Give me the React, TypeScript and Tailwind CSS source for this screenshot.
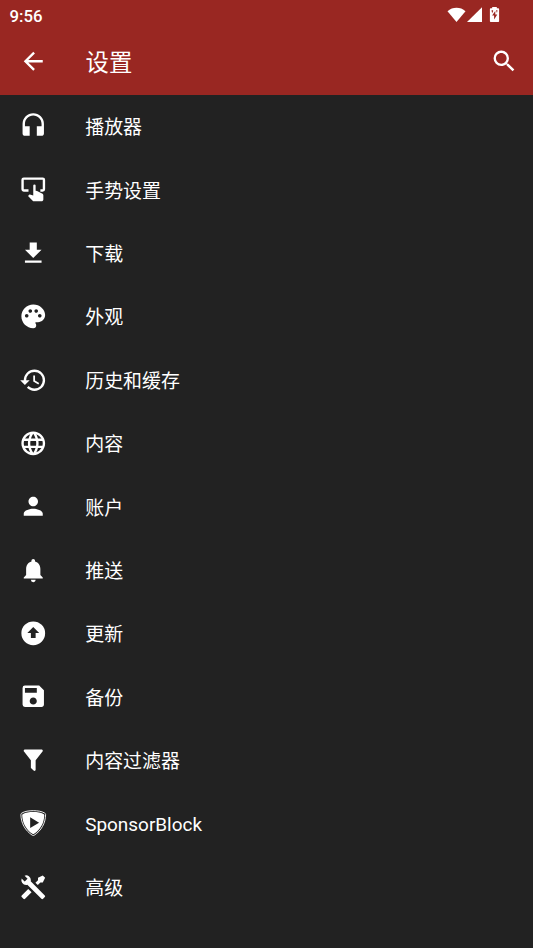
import { ReactNode } from "react";
import { MdPalette, MdPerson, MdNotifications, MdSave, MdSearch } from "react-icons/md";

const icon = "size-[28.5px] shrink-0";

function Glyph({ d }: { d: string }) {
  return (
    <svg viewBox="0 0 24 24" className={icon} fill="currentColor" fillRule="evenodd">
      <path d={d} />
    </svg>
  );
}

const items: { label: string; icon: ReactNode }[] = [
  { label: "播放器", icon: <Glyph d="M12 1a9 9 0 0 0-9 9v8c0 1.1.9 2 2 2h4v-8H5v-2c0-3.87 3.13-7 7-7s7 3.13 7 7v2h-4v8h4c1.1 0 2-.9 2-2v-8a9 9 0 0 0-9-9z" /> },
  { label: "手势设置", icon: <Glyph d="M4 2h16a2 2 0 0 1 2 2v8a2 2 0 0 1-2 2h-2v-2h2V4H4v8h4v2H4a2 2 0 0 1-2-2V4a2 2 0 0 1 2-2zM13 7.900a1 1 0 0 1 1 1v4.400l1.200.2 4.200 2.100c.7.300 1.100.8 1.100 1.500v3.500c0 .9-.7 1.500-1.600 1.500h-6.300c-.4 0-.8-.2-1.100-.5l-3.900-4 .8-.8c.2-.2.5-.3.8-.3l2.800.7V8.900a1 1 0 0 1 1-1z" /> },
  { label: "下载", icon: <Glyph d="M5 20h14v-2H5m14-9h-4V3H9v6H5l7 7z" /> },
  { label: "外观", icon: <MdPalette className={icon} /> },
  { label: "历史和缓存", icon: <Glyph d="M13.5 8H12v5l4.28 2.54.72-1.21-3.5-2.08V8M13 3a9 9 0 0 0-9 9H1l3.96 4.03L9 12H6a7 7 0 0 1 7-7 7 7 0 0 1 7 7 7 7 0 0 1-7 7c-1.93 0-3.68-.79-4.94-2.06l-1.42 1.42A8.896 8.896 0 0 0 13 21a9 9 0 0 0 9-9 9 9 0 0 0-9-9" /> },
  { label: "内容", icon: <Glyph d="M11.99 2C6.47 2 2 6.48 2 12s4.47 10 9.99 10C17.52 22 22 17.52 22 12S17.52 2 11.99 2zm6.93 6h-2.95a15.65 15.65 0 0 0-1.38-3.56A8.03 8.03 0 0 1 18.92 8zM12 4.04c.83 1.2 1.48 2.53 1.91 3.96h-3.82c.43-1.43 1.08-2.76 1.91-3.96zM4.26 14C4.1 13.36 4 12.69 4 12s.1-1.36.26-2h3.38c-.08.66-.14 1.32-.14 2s.06 1.34.14 2H4.26zm.82 2h2.95c.32 1.25.78 2.45 1.38 3.56A7.987 7.987 0 0 1 5.08 16zm2.95-8H5.08a7.987 7.987 0 0 1 4.33-3.56A15.65 15.65 0 0 0 8.03 8zM12 19.96c-.83-1.2-1.48-2.53-1.91-3.96h3.82c-.43 1.43-1.08 2.76-1.91 3.96zM14.34 14H9.66c-.09-.66-.16-1.32-.16-2s.07-1.35.16-2h4.68c.09.65.16 1.32.16 2s-.07 1.34-.16 2zm.25 5.56c.6-1.11 1.06-2.31 1.38-3.56h2.95a8.03 8.03 0 0 1-4.33 3.56zM16.36 14c.08-.66.14-1.32.14-2s-.06-1.34-.14-2h3.38c.16.64.26 1.31.26 2s-.1 1.36-.26 2h-3.38z" /> },
  { label: "账户", icon: <MdPerson className={icon} /> },
  { label: "推送", icon: <MdNotifications className={icon} /> },
  { label: "更新", icon: <Glyph d="M12 2a10 10 0 1 0 0 20 10 10 0 0 0 0-20zM12 6.800l5 5h-3v4.200h-4v-4.200H7z" /> },
  { label: "备份", icon: <MdSave className={icon} /> },
  { label: "内容过滤器", icon: <Glyph d="M14 12v7.88c.04.3-.06.62-.29.83a1 1 0 0 1-1.41 0l-2.01-2.01a.99.99 0 0 1-.29-.83V12h-.03L4.21 4.62a1 1 0 0 1 .17-1.4C4.57 3.08 4.78 3 5 3h14c.22 0 .43.08.62.22a1 1 0 0 1 .17 1.4L14.03 12H14z" /> },
  {
    label: "SponsorBlock",
    icon: (
      <svg viewBox="0 0 24 24" className={icon}>
        <path d="M12 1.400c3.500 0 7.200.5 9.600 2 .6.3.8.7.8 1.300-.1 7.300-3.700 13.600-9.600 17.400-.5.3-1.100.3-1.600 0C5.300 18.300 1.700 12 1.600 4.700c0-.6.2-1 .8-1.300 2.400-1.500 6.100-2 9.600-2z" fill="none" stroke="currentColor" strokeWidth=".75" />
        <path d="M12 2.500c3.500 0 6.300.5 8.600 1.700.5.2.7.5.7 1-.2 6.500-3.200 12-8.600 15.700-.5.3-.9.3-1.400 0C5.900 17.200 2.900 11.700 2.700 5.200c0-.5.2-.8.7-1C5.700 3 8.500 2.500 12 2.500zM9.400 6.900v9.200l7.500-4.600z" fill="currentColor" fillRule="evenodd" />
      </svg>
    ),
  },
  { label: "高级", icon: <Glyph d="M21.71 20.29l-1.42 1.42a1 1 0 0 1-1.41 0L7 9.85A3.81 3.81 0 0 1 6 10a4 4 0 0 1-3.78-5.3l2.54 2.54.53-.53 1.42-1.42.53-.53L4.7 2.22A4 4 0 0 1 10 6a3.81 3.81 0 0 1-.15 1l11.86 11.88a1 1 0 0 1 0 1.41M2.29 18.880a1 1 0 0 0 0 1.410l1.420 1.420a1 1 0 0 0 1.410 0l5.470-5.460-2.830-2.830M20 2l-4 2v2l-2.170 2.170 2 2L18 8h2l2-4z" /> },
];

export default function App() {
  return (
    <div className="flex h-[948px] w-[533px] flex-col overflow-hidden bg-[#222222] font-[Roboto,'Noto_Sans_CJK_SC',sans-serif] text-white">
      <header className="h-[95px] bg-[#992722]">
        <div className="flex h-[29px] items-center justify-between pr-[32px] pl-[9.5px]">
          <span className="pt-[2px] text-[16.8px] leading-5 font-medium">9:56</span>
          <svg viewBox="0 0 54 16" className="mt-px h-4 w-[54px]" fill="currentColor">
            <path d="M.5 4.300C5.500-.300 13.500-.300 18.500 4.300L9.500 15z" />
            <path d="M35 .2V15H20z" />
            <path fillRule="evenodd" d="M45.200 0h4.600v1.300h1.500c.5 0 .8.300.8.800v12.100c0 .5-.3.800-.8.800h-7.600c-.5 0-.8-.3-.8-.8V2.100c0-.5.300-.8.800-.8h1.500zM48.300 4l-3.200 4.600h2v3.900l3.200-5h-2zM44.500 3.300h1.600v1l-1 2zM49 3.300h1.500l-.5 2.600z" />
          </svg>
        </div>
        <div className="flex h-[65px] items-center pr-[14.5px] pl-[18.5px]">
          <svg viewBox="0 0 24 24" className="size-[28.5px]" fill="currentColor"><path d="M20 11H7.830l5.590-5.590L12 4l-8 8 8 8 1.410-1.410L7.830 13H20z" /></svg>
          <h1 className="ml-[38.5px] flex-1 pt-[3px] text-[23.4px] leading-8">设置</h1>
          <MdSearch className="size-[28.5px]" />
        </div>
      </header>
      <ul>
        {items.map((item) => (
          <li key={item.label} className="flex h-[63.4px] items-center pb-px pl-[18.5px]">
            {item.icon}
            <span className="ml-[38.2px] pt-[4px] text-[18.95px] leading-7">{item.label}</span>
          </li>
        ))}
      </ul>
    </div>
  );
}
